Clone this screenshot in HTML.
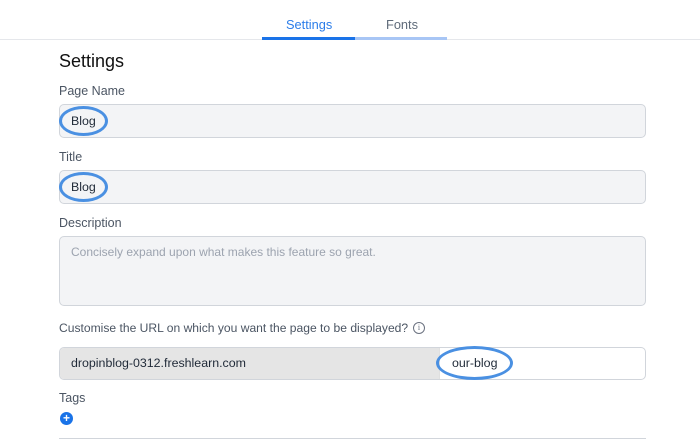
<!DOCTYPE html>
<html><head><style>
*{margin:0;padding:0;box-sizing:border-box}
body{width:700px;height:440px;background:#fff;font-family:"Liberation Sans",sans-serif;position:relative;overflow:hidden;color:#111}
.a{position:absolute}
.lbl{position:absolute;left:59px;font-size:12.5px;color:#4b5563}
.inp{position:absolute;left:59px;width:587px;background:#f3f4f6;border:1px solid #d1d5db;border-radius:5px}
.ell{position:absolute;border:3.5px solid #4a90e2;border-radius:50%}
.t{position:absolute;font-size:12.4px;color:#1f2937}
</style></head><body>
<div class="a" style="left:0;top:39px;width:700px;height:1px;background:#e5e7eb"></div>
<div class="a" style="left:262px;top:37px;width:93px;height:3px;background:#1a73e8"></div>
<div class="a" style="left:355px;top:37px;width:92px;height:3px;background:#a8c6f5"></div>
<div class="a" style="left:286px;top:17px;font-size:12.8px;color:#2b7de9">Settings</div>
<div class="a" style="left:386px;top:17px;font-size:12.8px;color:#5f6b7a">Fonts</div>
<div class="a" style="left:59px;top:51px;font-size:18px;color:#111">Settings</div>
<div class="lbl" style="top:84px">Page Name</div>
<div class="inp" style="top:104px;height:34px"></div>
<div class="t" style="left:71px;top:114px">Blog</div>
<div class="ell" style="left:59px;top:106px;width:49px;height:30px"></div>
<div class="lbl" style="top:150px">Title</div>
<div class="inp" style="top:170px;height:34px"></div>
<div class="t" style="left:71px;top:180px">Blog</div>
<div class="ell" style="left:59px;top:172px;width:49px;height:30px"></div>
<div class="lbl" style="top:216px">Description</div>
<div class="inp" style="top:236px;height:70px"></div>
<div class="a" style="left:71px;top:245px;font-size:12px;color:#9ca3af">Concisely expand upon what makes this feature so great.</div>
<div class="lbl" style="top:321px;font-size:12.1px">Customise the URL on which you want the page to be displayed?</div>
<div class="a" style="left:413px;top:322px;width:12px;height:12px;border:1px solid #6b7280;border-radius:50%;font-size:8px;color:#6b7280;text-align:center;line-height:10px;font-family:'Liberation Serif',serif">i</div>
<div class="inp" style="top:347px;height:33px;background:#fff"></div>
<div class="a" style="left:60px;top:348px;width:380px;height:31px;background:#e5e5e5;border-radius:4px 0 0 4px;border-right:1px solid #e0e0e0"></div>
<div class="t" style="left:71px;top:356px">dropinblog-0312.freshlearn.com</div>
<div class="t" style="left:452px;top:356px">our-blog</div>
<div class="ell" style="left:436px;top:346px;width:77px;height:34px"></div>
<div class="lbl" style="top:391px">Tags</div>
<div class="a" style="left:60px;top:412px;width:13px;height:13px;border-radius:50%;background:#1a73e8;color:#fff;font-size:12px;font-weight:bold;line-height:13px;text-align:center">+</div>
<div class="a" style="left:59px;top:438px;width:587px;height:1px;background:#d1d5db"></div>
</body></html>
